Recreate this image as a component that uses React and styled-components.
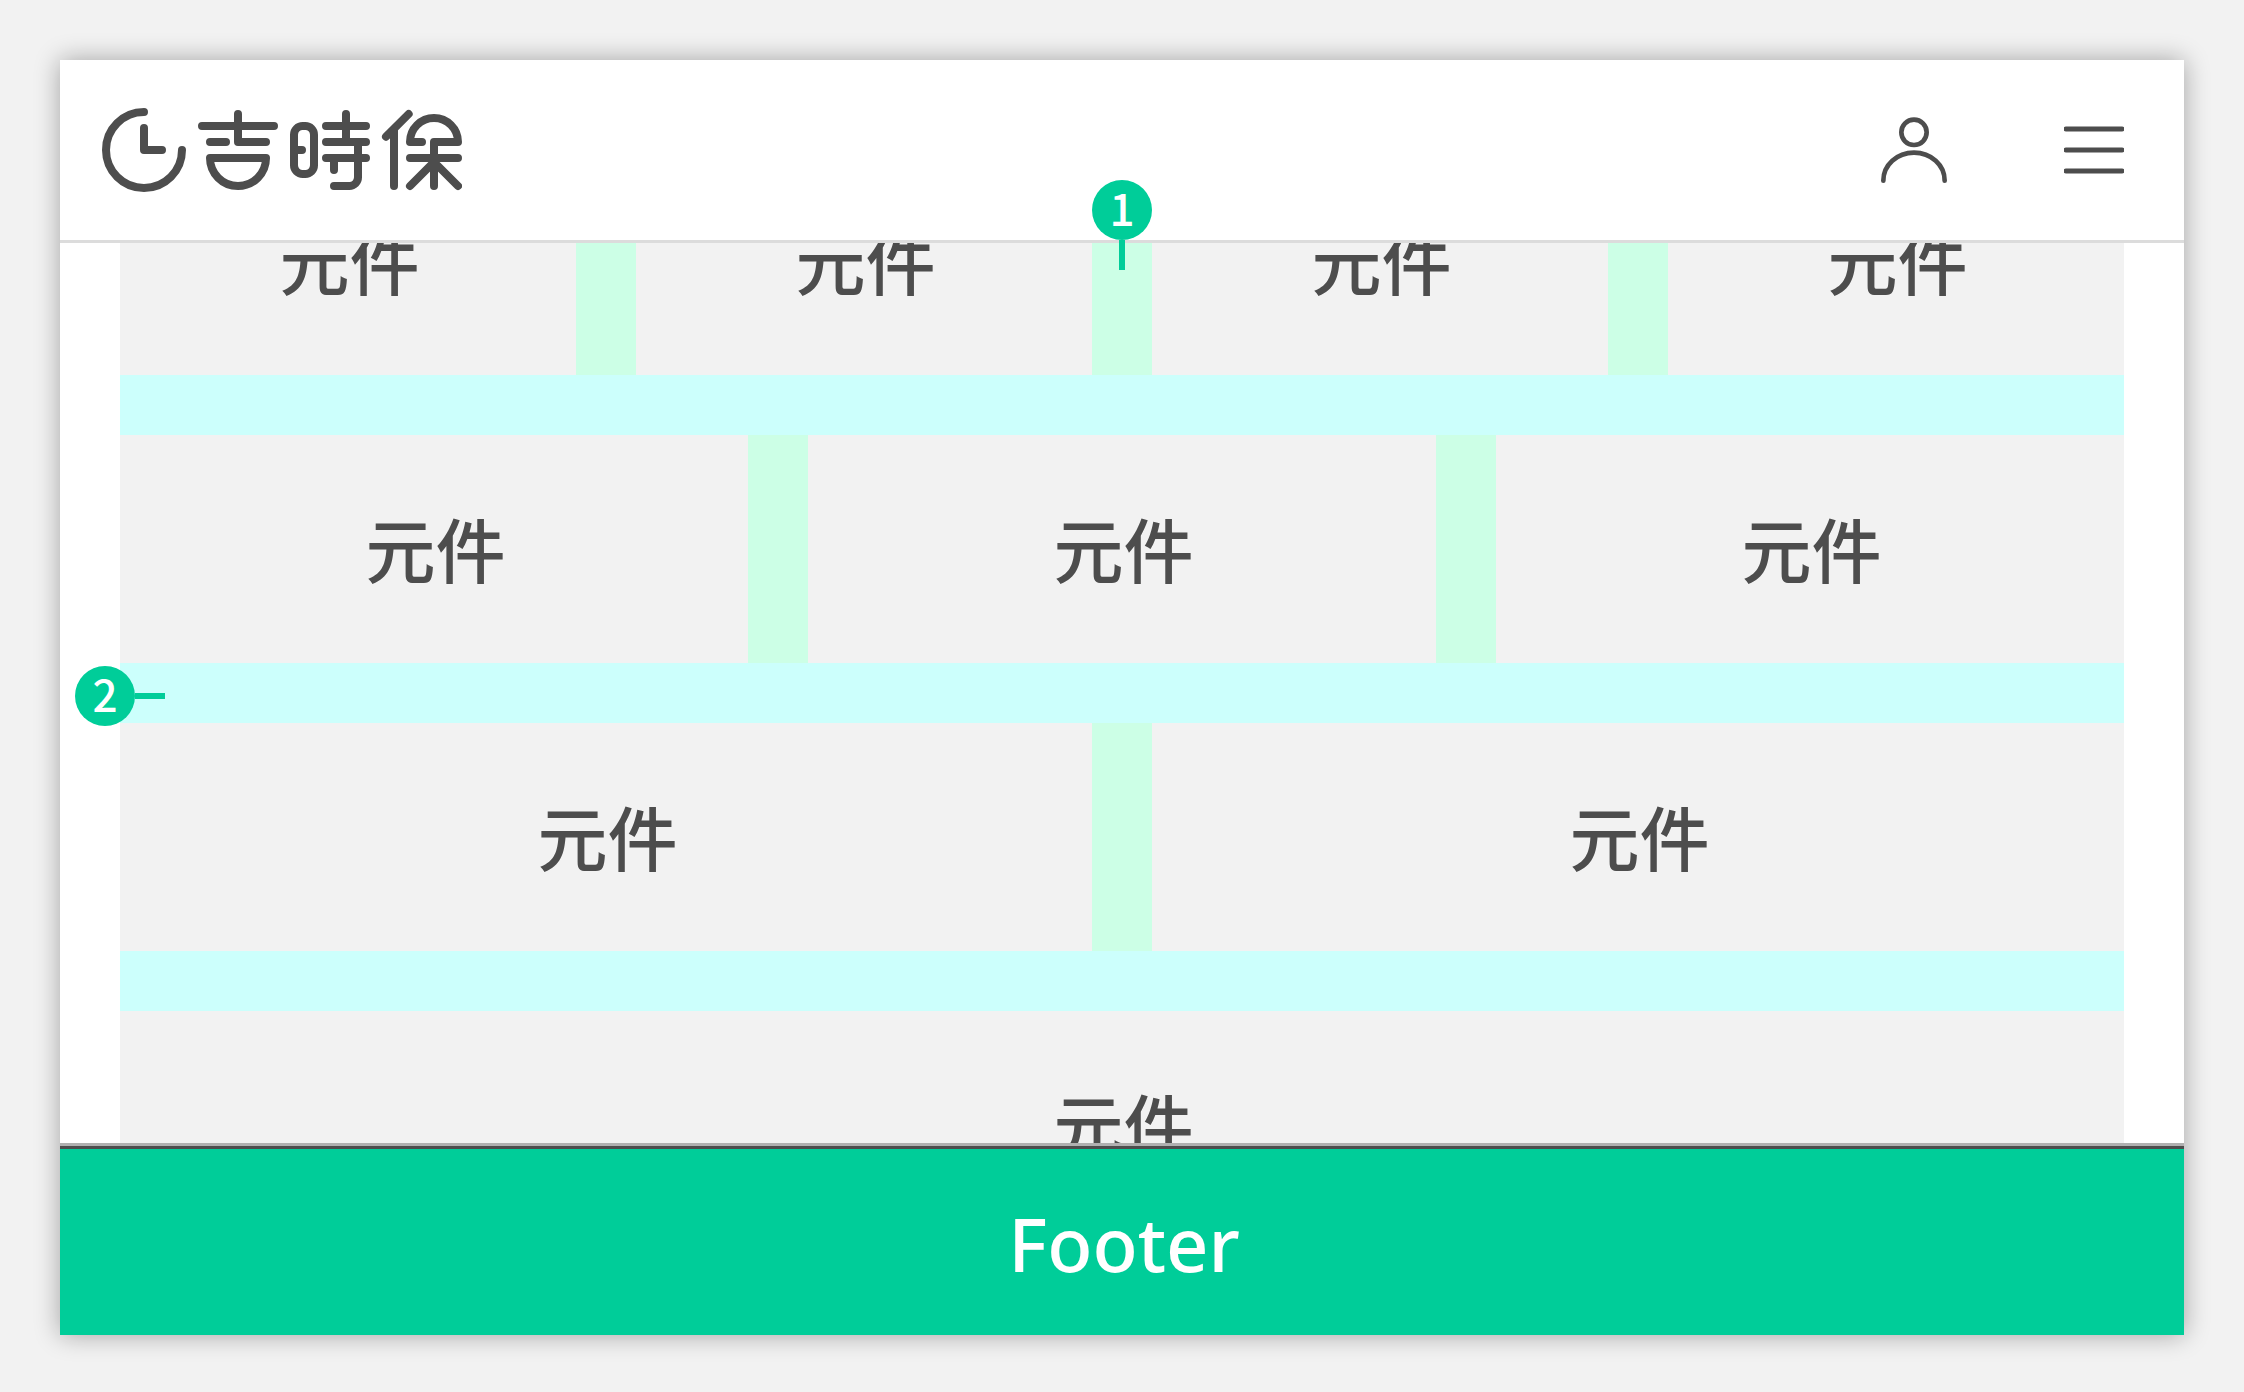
import React from 'react'
import { styled, createGlobalStyle } from 'styled-components';

const rows = [4, 3, 2, 1]

function Logo() {
  return (
    <LogoSvg viewBox="66 54 1080 252" role="img" aria-label="吉時保">
      <path d="M192 66A114 114 0 1 0 306 180M192 114V180H246" />
      <path d="M366 108H582M474 72V156H558M390 156H438M390 204H558A84 84 0 0 1 390 204Z" />
      <rect x="642" y="108" width="60" height="144" rx="26" />
      <path d="M654 180H666M798 72V156M738 108H858M738 156H858M738 204H858M762 204V240M834 156V262A26 26 0 0 1 808 288H762" />
      <path d="M918 140L986 72M942 118V288M1026 156H990A72 72 0 0 1 1134 156H1062V288M990 204H1134M990 288L1062 216L1134 288" />
    </LogoSvg>
  )
}

function App() {
  return (
    <>
      <GlobalStyle />
      <Page>
        <Panel>
          <Header>
            <HomeLink href="#">
              <Logo />
            </HomeLink>
            <Actions>
              <IconButton type="button" aria-label="會員">
                <UserSvg viewBox="123 80 198 198">
                  <circle cx="222" cy="126" r="38" />
                  <path d="M130 271C130 224 171 187 222 187C273 187 314 224 314 271" />
                </UserSvg>
              </IconButton>
              <IconButton type="button" aria-label="選單">
                <MenuSvg viewBox="0 0 60 48">
                  <path d="M2 3H58M2 24H58M2 45H58" />
                </MenuSvg>
              </IconButton>
            </Actions>
            <ColumnMarker>
              <Badge>1</Badge>
              <Stem $vertical />
            </ColumnMarker>
          </Header>
          <Content>
            <Stack>
              {rows.map((count) => (
                <Row key={count}>
                  {Array.from({ length: count }, (_, i) => (
                    <Cell key={i}>元件</Cell>
                  ))}
                  {count === 3 && (
                    <RowMarker>
                      <Badge>2</Badge>
                      <Stem />
                    </RowMarker>
                  )}
                </Row>
              ))}
            </Stack>
          </Content>
          <Footer>Footer</Footer>
        </Panel>
      </Page>
    </>
  )
}

const GlobalStyle = createGlobalStyle`
  * {
    box-sizing: border-box;
  }
  body {
    margin: 0;
    background: #f2f2f2;
    color: #4d4d4d;
    font-family: "Noto Sans", "Noto Sans CJK TC", sans-serif;
  }
`
const Page = styled.div`
  display: flex;
  height: 100vh;
  padding: 60px 60px 57px;
`
const Panel = styled.div`
  flex: 1;
  display: flex;
  flex-direction: column;
  background: #fff;
  box-shadow: 0 0 24px rgba(0, 0, 0, 0.33);
`
const Header = styled.header`
  position: relative;
  z-index: 1;
  flex: none;
  display: flex;
  align-items: center;
  justify-content: space-between;
  height: 183px;
  padding: 0 60px 0 42px;
  border-bottom: 3px solid #dcdcdc;
`
const HomeLink = styled.a`
  display: flex;
`
const LogoSvg = styled.svg`
  width: 360px;
  height: 84px;
  fill: none;
  stroke: #4d4d4d;
  stroke-width: 24;
  stroke-linecap: round;
  stroke-linejoin: round;
`
const Actions = styled.div`
  display: flex;
  align-items: center;
  gap: 117px;
`
const IconButton = styled.button`
  display: flex;
  padding: 0;
  border: 0;
  background: none;
  cursor: pointer;
`
const UserSvg = styled.svg`
  width: 66px;
  height: 66px;
  fill: none;
  stroke: #4d4d4d;
  stroke-width: 14;
  stroke-linecap: round;
`
const MenuSvg = styled.svg`
  width: 60px;
  height: 48px;
  stroke: #4d4d4d;
  stroke-width: 5;
  stroke-linecap: round;
`
const Content = styled.main`
  flex: 1;
  min-height: 0;
  display: flex;
  flex-direction: column;
  justify-content: center;
  padding: 0 60px;
  overflow: hidden;
`
const Stack = styled.div`
  flex: none;
  display: flex;
  flex-direction: column;
  gap: 60px;
  background: #ccfffc;
`
const Row = styled.div`
  position: relative;
  display: flex;
  gap: 60px;
  background: #ccffe6;
`
const Cell = styled.div`
  flex: 1;
  display: flex;
  align-items: center;
  justify-content: center;
  height: 228px;
  padding: 0 0 3px 3px;
  background: #f2f2f2;
  font-family: "Noto Sans CJK TC", sans-serif;
  font-size: 70px;
  font-weight: 500;
  line-height: 72px;
`
const ColumnMarker = styled.div`
  position: absolute;
  top: 120px;
  left: 50%;
  display: flex;
  flex-direction: column;
  align-items: center;
  transform: translateX(-50%);
`
const RowMarker = styled.div`
  position: absolute;
  top: 100%;
  left: -45px;
  display: flex;
  align-items: center;
  margin-top: 3px;
`
const Badge = styled.span`
  display: flex;
  align-items: center;
  justify-content: center;
  width: 60px;
  height: 60px;
  padding-bottom: 6px;
  border-radius: 50%;
  background: #00cd99;
  color: #fff;
  font-family: "Noto Sans CJK TC", sans-serif;
  font-size: 44px;
  font-weight: 500;
  line-height: 54px;
`
const Stem = styled.span`
  width: ${(props) => (props.$vertical ? '6px' : '30px')};
  height: ${(props) => (props.$vertical ? '30px' : '6px')};
  background: #00cd99;
`
const Footer = styled.footer`
  flex: none;
  display: flex;
  align-items: center;
  justify-content: center;
  height: 192px;
  padding: 6px 0 0 4px;
  border-top: 3px solid #b0b0b0;
  background: #00cd99;
  box-shadow: inset 0 3px #4d4d4d;
  color: #fff;
  font-size: 74px;
  font-weight: 500;
`
export default App;
